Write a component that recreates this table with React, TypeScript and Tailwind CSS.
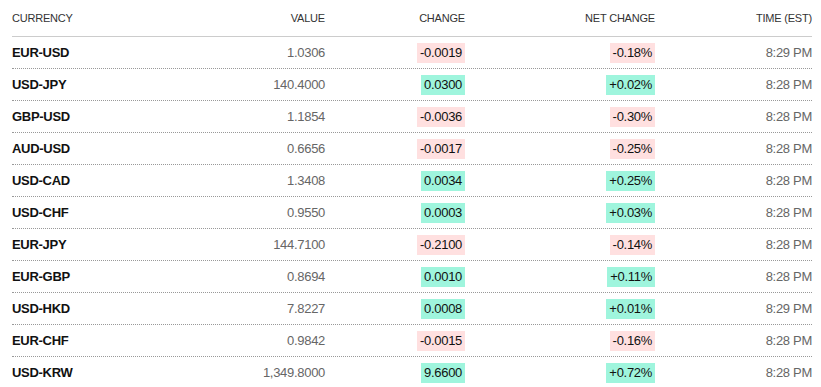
const rows = [
  { pair: "EUR-USD", value: "1.0306", change: "-0.0019", net: "-0.18%", time: "8:29 PM" },
  { pair: "USD-JPY", value: "140.4000", change: "0.0300", net: "+0.02%", time: "8:28 PM" },
  { pair: "GBP-USD", value: "1.1854", change: "-0.0036", net: "-0.30%", time: "8:28 PM" },
  { pair: "AUD-USD", value: "0.6656", change: "-0.0017", net: "-0.25%", time: "8:28 PM" },
  { pair: "USD-CAD", value: "1.3408", change: "0.0034", net: "+0.25%", time: "8:28 PM" },
  { pair: "USD-CHF", value: "0.9550", change: "0.0003", net: "+0.03%", time: "8:28 PM" },
  { pair: "EUR-JPY", value: "144.7100", change: "-0.2100", net: "-0.14%", time: "8:28 PM" },
  { pair: "EUR-GBP", value: "0.8694", change: "0.0010", net: "+0.11%", time: "8:28 PM" },
  { pair: "USD-HKD", value: "7.8227", change: "0.0008", net: "+0.01%", time: "8:29 PM" },
  { pair: "EUR-CHF", value: "0.9842", change: "-0.0015", net: "-0.16%", time: "8:28 PM" },
  { pair: "USD-KRW", value: "1,349.8000", change: "9.6600", net: "+0.72%", time: "8:28 PM" },
]

function Badge({ text }: { text: string }) {
  const down = text.startsWith("-")
  return (
    <span className={`inline-flex h-5 items-center px-[3px] text-[#111] ${down ? "bg-[#ffe0e0]" : "bg-[#9ff5dd]"}`}>
      {text}
    </span>
  )
}

export default function App() {
  return (
    <div className="bg-white w-[821px] h-[387px] overflow-hidden font-['Liberation_Sans',Arial,sans-serif]">
      <div className="ml-3 w-[800px]">
        <div className="grid grid-cols-[160px_153px_140px_190px_157px] h-[37px] items-center pt-[1px] border-b border-[#cccccc] text-[11px] text-[#333] tracking-[-0.2px]">
          <div>CURRENCY</div>
          <div className="text-right">VALUE</div>
          <div className="text-right">CHANGE</div>
          <div className="text-right">NET CHANGE</div>
          <div className="text-right">TIME (EST)</div>
        </div>
        {rows.map((r) => (
          <div
            key={r.pair}
            className="grid grid-cols-[160px_153px_140px_190px_157px] h-8 items-center border-b border-dotted border-[#999] text-[13px] tracking-[-0.3px]"
          >
            <div className="font-bold text-[#111]">{r.pair}</div>
            <div className="text-right text-[#666]">{r.value}</div>
            <div className="text-right"><Badge text={r.change} /></div>
            <div className="text-right"><Badge text={r.net} /></div>
            <div className="text-right text-[#666]">{r.time}</div>
          </div>
        ))}
      </div>
    </div>
  )
}
